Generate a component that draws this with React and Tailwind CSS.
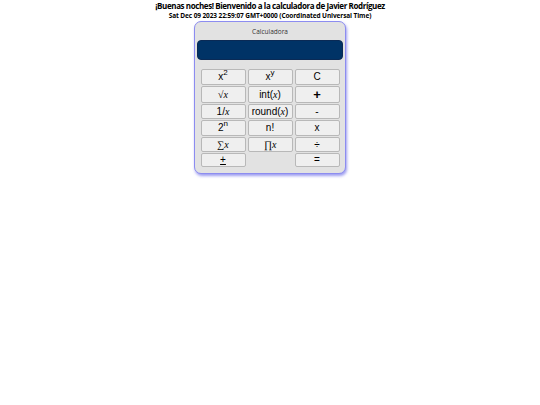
export default function App() {
  const btn =
    "flex items-center justify-center bg-[#efefef] border border-[#b8b8b8] rounded-[2px] text-[10px] leading-none text-black";
  const serif = { fontFamily: '"Liberation Serif", serif' };
  const X = () => (
    <i className="font-['Liberation_Serif',serif] italic">x</i>
  );
  const Sup = ({ c }) => (
    <span className="text-[8px] leading-none relative -top-[4px]">{c}</span>
  );
  return (
    <div className="w-[540px] h-[405px] bg-white flex flex-col items-center font-['Liberation_Sans',Arial,sans-serif]">
      <div className="mt-[1px] text-[8px] leading-[10px] font-bold text-black font-['Open_Sans',sans-serif] tracking-[-0.4px]">
        ¡Buenas noches! Bienvenido a la calculadora de Javier Rodríguez
      </div>
      <div className="text-[6.5px] leading-[10px] font-bold text-black font-['Open_Sans',sans-serif] tracking-[-0.1px]">
        Sat Dec 09 2023 22:59:07 GMT+0000 (Coordinated Universal Time)
      </div>
      <div className="w-[152px] h-[153px] bg-[#e2e2e2] border-[1.5px] border-[#8c8cf0] rounded-[7px] shadow-[1px_2px_3px_rgba(90,90,230,0.6)] flex flex-col items-center">
        <div className="mt-[6px] text-[6.5px] leading-[8px] text-[#333] font-['Open_Sans',sans-serif]">
          Calculadora
        </div>
        <div className="mt-[4px] w-[146px] h-[20px] bg-[#003366] rounded-[4px] border border-[#0a2a55]" />
        <div className="mt-[9px] grid grid-cols-[45px_45px_45px] grid-rows-[16px_17px_15px_16px_15px_14px] gap-x-[2px] gap-y-[1px]">
          <div className={btn}>
            x<Sup c="2" />
          </div>
          <div className={btn}>
            x<Sup c="y" />
          </div>
          <div className={btn}>C</div>

          <div className={btn + " text-[#555]"}>
            <span style={serif}>√</span>
            <X />
          </div>
          <div className={btn}>
            int(<X />)
          </div>
          <div className={btn + " font-bold text-[13px]"}>+</div>

          <div className={btn}>
            1/<X />
          </div>
          <div className={btn}>
            round(<X />)
          </div>
          <div className={btn + " text-[#555]"}>-</div>

          <div className={btn}>
            2<Sup c="n" />
          </div>
          <div className={btn}>n!</div>
          <div className={btn}>x</div>

          <div className={btn}>
            <span style={serif}>∑</span>
            <X />
          </div>
          <div className={btn}>
            <span style={serif}>∏</span>
            <X />
          </div>
          <div className={btn + " text-[#555]"}>÷</div>

          <div className={btn}>
            <span className="underline">+</span>
          </div>
          <div />
          <div className={btn}>=</div>
        </div>
      </div>
    </div>
  );
}
